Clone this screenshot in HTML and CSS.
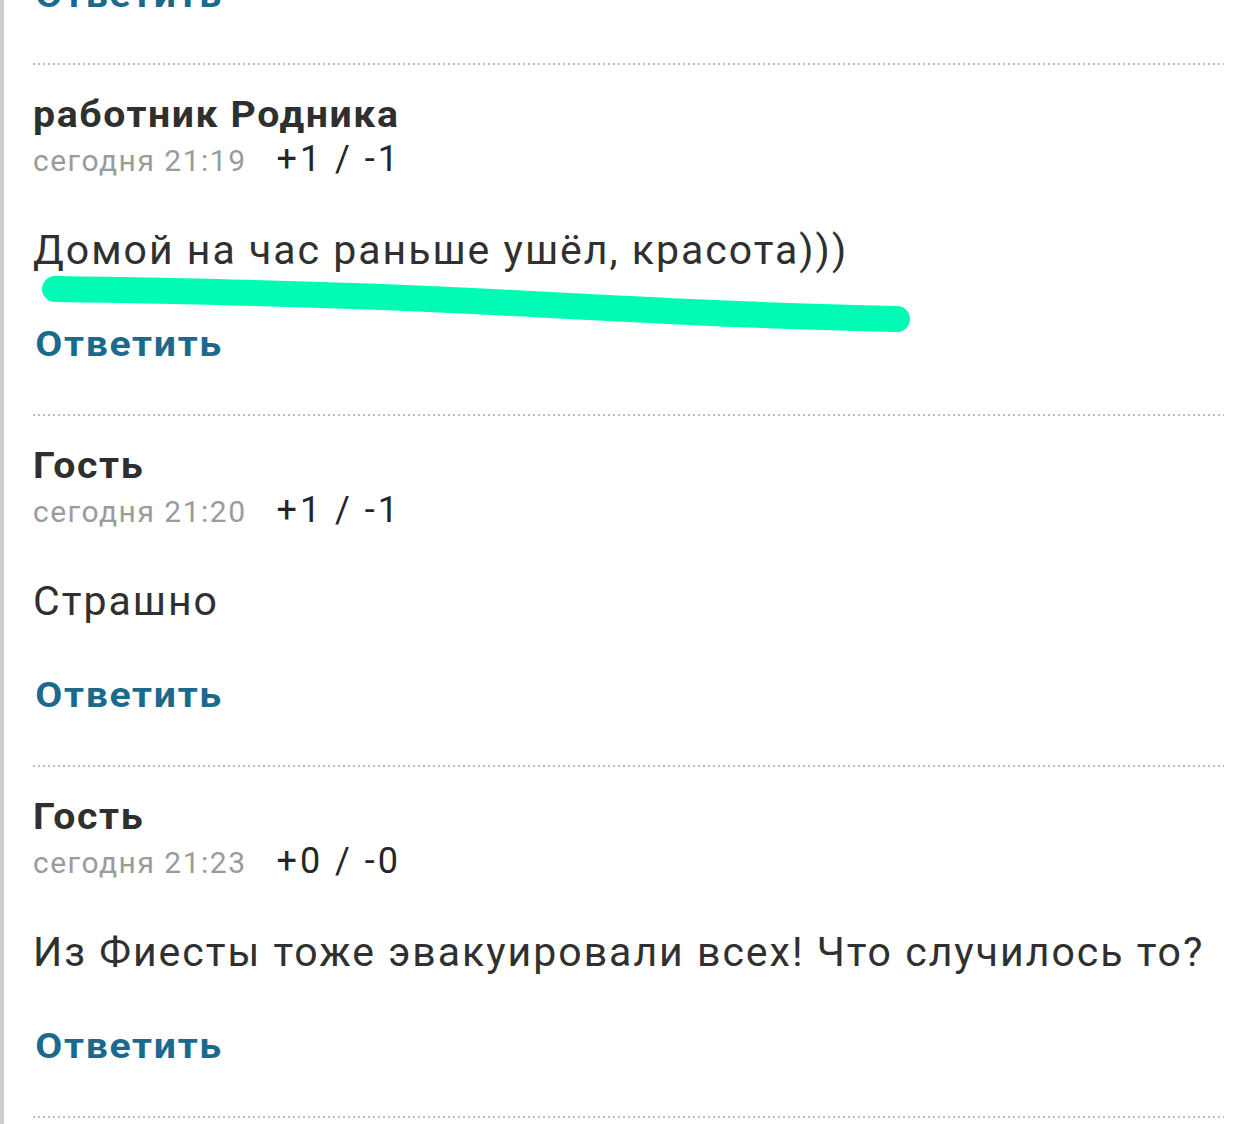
FILE: index.html
```html
<!DOCTYPE html>
<html lang="ru">
<head>
<meta charset="utf-8">
<title>Комментарии</title>
<link rel="stylesheet" href="styles.css">
</head>
<body>
<div class="page">
  <div class="comments">
    <div class="tail">
      <a class="reply" href="#">Ответить</a>
    </div>

    <article class="comment">
      <div class="author">работник Родника</div>
      <div class="meta"><span class="date">сегодня 21:19</span><span class="votes">+1 / -1</span></div>
      <p class="text">Домой на час раньше ушёл, красота)))</p>
      <a class="reply" href="#">Ответить</a>
      <svg class="marker" width="900" height="300" viewBox="0 0 900 300" aria-hidden="true">
        <path d="M22 226 C 160 228 330 232 460 239 S 720 253 864 256" fill="none" stroke="#02fbb4" stroke-width="26" stroke-linecap="round"/>
      </svg>
    </article>

    <article class="comment">
      <div class="author">Гость</div>
      <div class="meta"><span class="date">сегодня 21:20</span><span class="votes">+1 / -1</span></div>
      <p class="text">Страшно</p>
      <a class="reply" href="#">Ответить</a>
    </article>

    <article class="comment">
      <div class="author">Гость</div>
      <div class="meta"><span class="date">сегодня 21:23</span><span class="votes">+0 / -0</span></div>
      <p class="text">Из Фиесты тоже эвакуировали всех! Что случилось то?</p>
      <a class="reply" href="#">Ответить</a>
    </article>

    <article class="comment end"></article>
  </div>
</div>
</body>
</html>
```

FILE: styles.css
```css
html, body {
  margin: 0;
  padding: 0;
  background: #ffffff;
}

body {
  font-family: Roboto, "Noto Sans", "Liberation Sans", sans-serif;
  color: #2e2e2e;
  overflow: hidden;
  height: 1124px;
}

.page {
  border-left: 4px solid #cfcfcf;
  min-height: 1124px;
  box-sizing: border-box;
}

.comments {
  margin-top: -24px;
  padding: 0 10px 0 29px;
}

.tail {
  display: flex;
  flex-direction: column;
  align-items: flex-start;
  padding-bottom: 47px;
}

.comment {
  position: relative;
  display: flex;
  flex-direction: column;
  align-items: flex-start;
  padding: 34px 0 49px;
  background-image: linear-gradient(to right, #bdbdbd 50%, rgba(255,255,255,0) 50%);
  background-size: 5px 2px;
  background-repeat: repeat-x;
  background-position: 0 0;
}

.author {
  font-size: 37px;
  font-weight: 700;
  line-height: 36px;
  letter-spacing: 1.5px;
  color: #2f2f2f;
  transform: scaleX(1.06);
  transform-origin: left center;
}

.meta {
  display: flex;
  align-items: baseline;
  gap: 30px;
  margin-top: 6px;
  line-height: 40px;
}

.date {
  font-size: 30px;
  letter-spacing: 1.5px;
  color: #9b9b9b;
}

.votes {
  font-size: 36px;
  letter-spacing: 3px;
  color: #262626;
}

.text {
  margin: 45px 0 0;
  font-size: 41px;
  line-height: 48px;
  letter-spacing: 2px;
  color: #303030;
}

.reply {
  margin-top: 51px;
  padding-left: 2px;
  font-size: 35px;
  font-weight: 700;
  line-height: 40px;
  letter-spacing: 1.5px;
  color: #1b6a8d;
  text-decoration: none;
  transform: scaleX(1.12);
  transform-origin: left center;
}

.tail .reply {
  margin-top: 0;
}

.marker {
  position: absolute;
  left: 0;
  top: 0;
  overflow: visible;
  pointer-events: none;
}

.comment.end {
  padding: 0;
  height: 20px;
}
```
